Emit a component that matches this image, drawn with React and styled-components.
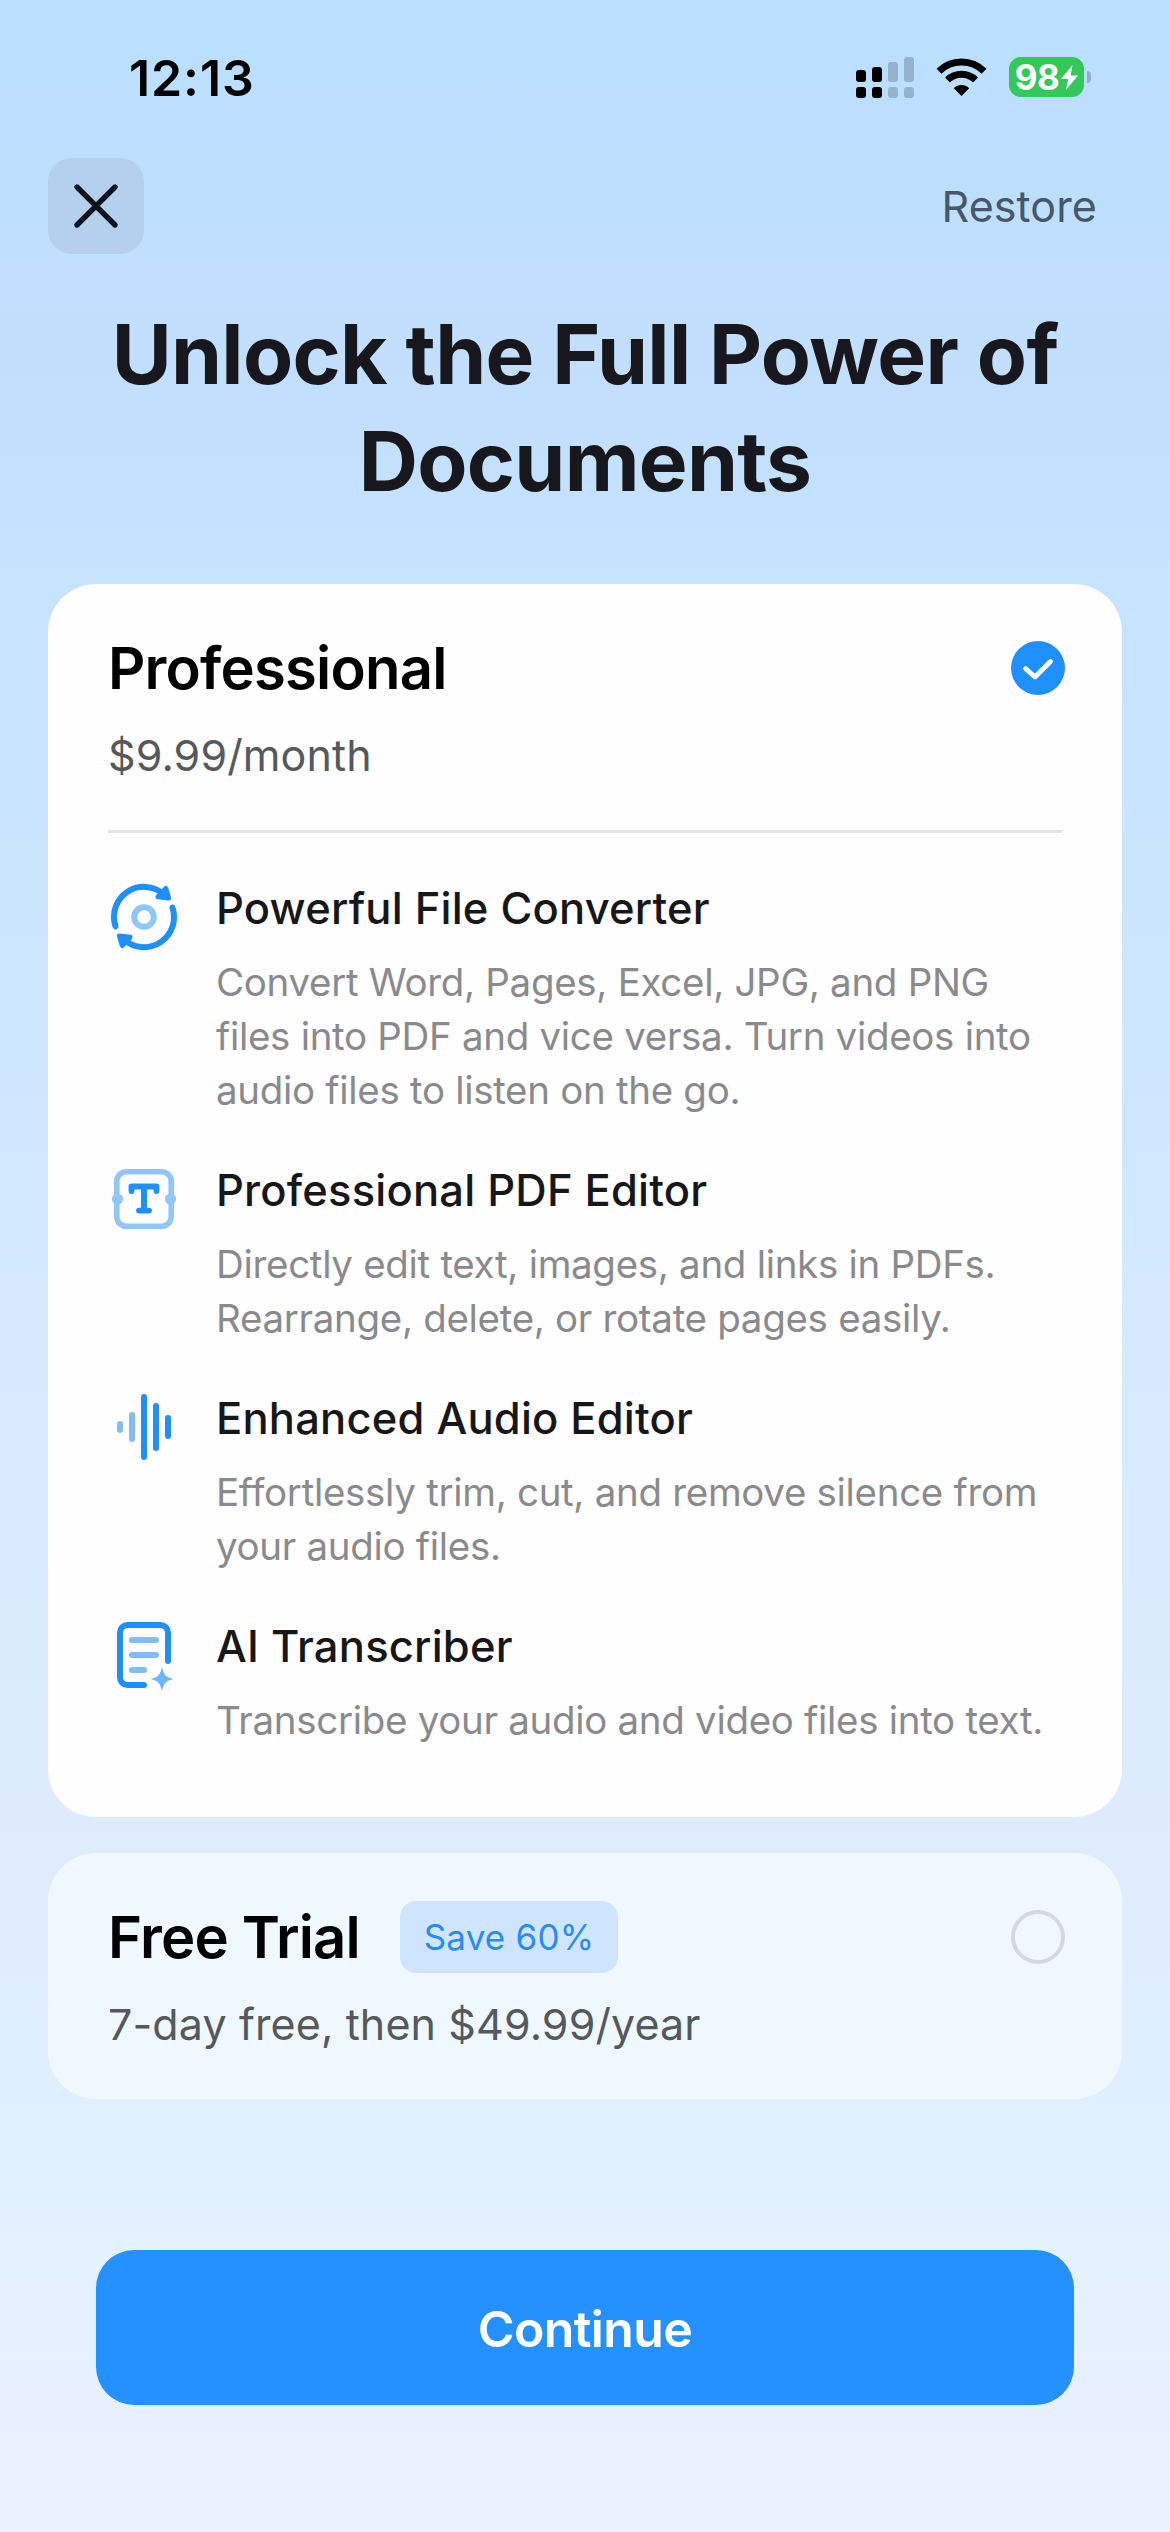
import React, { useState } from 'react'
import styled, { createGlobalStyle } from 'styled-components'

const GlobalStyle = createGlobalStyle`
    * {
        box-sizing: border-box;
    }

    body {
        margin: 0;
        font-family: Inter, "Liberation Sans", sans-serif;
    }

    h1, h2, h3, p {
        margin: 0;
    }

    button {
        font-family: inherit;
        border: none;
        padding: 0;
        cursor: pointer;
    }
`

const Screen = styled.main`
    width: 1170px;
    height: 2532px;
    display: flex;
    flex-direction: column;
    overflow: hidden;
    background: linear-gradient(
        180deg,
        #bbdfff 0,
        #bcdffe 180px,
        #c1dffe 260px,
        #c2e0fd 430px,
        #c6e4ff 600px,
        #cee5ff 1000px,
        #d6ebff 1400px,
        #deebfe 1800px,
        #e0effe 2100px,
        #e4f2fe 2250px,
        #e8f0ff 2410px,
        #ebf2ff 2532px
    );
`

const StatusBar = styled.div`
    height: 158px;
    padding: 57px 79px 0 129px;
    display: flex;
    justify-content: space-between;
    align-items: flex-start;
`

const Time = styled.span`
    font-size: 50px;
    font-weight: 600;
    line-height: 42px;
    letter-spacing: 0.9px;
    color: #000;
`

const StatusIcons = styled.div`
    display: flex;
    align-items: center;
    height: 40px;
`

const Wifi = styled.svg`
    margin: 0 22px 0 22px;
`

const Battery = styled.div`
    width: 75px;
    height: 40px;
    border-radius: 12px;
    background: #34c759;
    color: #fff;
    display: flex;
    align-items: center;
    justify-content: center;
    gap: 2px;
    font-size: 35px;
    font-weight: 700;
    letter-spacing: -0.6px;
`

const BatteryTip = styled.div`
    width: 4px;
    height: 12px;
    margin-left: 3px;
    border-radius: 0 5px 5px 0;
    background: #8fb0d4;
`

const TopBar = styled.header`
    display: flex;
    align-items: center;
    justify-content: space-between;
    padding: 0 73px 0 48px;
`

const CloseButton = styled.button`
    width: 96px;
    height: 96px;
    border-radius: 24px;
    background: #b4d0ec;
    display: flex;
    align-items: center;
    justify-content: center;
`

const RestoreButton = styled.button`
    background: none;
    color: #47566b;
    font-size: 43px;
    line-height: 54px;
    letter-spacing: 0.1px;
`

const Title = styled.h1`
    margin-top: 47px;
    text-align: center;
    white-space: pre-line;
    color: #17171d;
    font-size: 82px;
    font-weight: 700;
    line-height: 107px;
    letter-spacing: -0.7px;
`

const Plans = styled.div`
    display: flex;
    flex-direction: column;
    gap: 36px;
    margin-top: 69px;
    padding: 0 48px;
`

const PlanCard = styled.section`
    padding: 48px 57px 48px 60px;
    border-radius: 48px;
    background: ${({ $selected }) => ($selected ? '#fefefe' : '#f0f8ff')};
`

const PlanHead = styled.div`
    display: flex;
    align-items: center;
    height: 72px;
`

const PlanName = styled.h2`
    color: #000;
    font-size: 58px;
    font-weight: 600;
    line-height: 72px;
    letter-spacing: -0.8px;
    white-space: nowrap;
`

const Badge = styled.span`
    width: 218px;
    height: 72px;
    margin-left: 40px;
    border-radius: 16px;
    background: #cfe5ff;
    color: #2b8cf0;
    font-size: 35px;
    line-height: 72px;
    letter-spacing: 0.2px;
    text-align: center;
`

const Radio = styled.span`
    width: 54px;
    height: 54px;
    margin-left: auto;
    border-radius: 50%;
    display: flex;
    align-items: center;
    justify-content: center;
    background: ${({ $checked }) => ($checked ? '#2190ff' : 'transparent')};
    border: ${({ $checked }) => ($checked ? 'none' : '4.5px solid #d2d9e1')};
`

const Price = styled.p`
    margin-top: 24px;
    color: #55585c;
    font-size: 43px;
    line-height: 54px;
    letter-spacing: 0.12px;
    white-space: nowrap;
`

const Divider = styled.hr`
    height: 3px;
    margin: 48px 3px 48px 0;
    border: none;
    background: #e4e4e6;
`

const Features = styled.ul`
    list-style: none;
    margin: 0 0 22px;
    padding: 0;
    display: flex;
    flex-direction: column;
    gap: 46px;
`

const Feature = styled.li`
    display: flex;
    gap: 36px;
`

const FeatureText = styled.div`
    display: flex;
    flex-direction: column;
    gap: 20px;
`

const FeatureTitle = styled.h3`
    color: #17171a;
    font-size: 43.5px;
    font-weight: 500;
    line-height: 54px;
    letter-spacing: 0.2px;
    white-space: nowrap;
`

const FeatureBody = styled.p`
    color: #8a8a8d;
    font-size: 38.5px;
    line-height: 54px;
    letter-spacing: -0.31px;
    white-space: pre;
`

const ContinueButton = styled.button`
    height: 155px;
    margin: 151px 96px 0;
    padding-top: 2px;
    border-radius: 38px;
    background: #2491ff;
    color: #fff;
    font-size: 50px;
    font-weight: 600;
    letter-spacing: -0.6px;
`

function ConvertIcon() {
    return (
        <svg width="72" height="72" viewBox="0 0 72 72" fill="none" stroke="#1f90fb" strokeWidth="6" strokeLinecap="round" strokeLinejoin="round">
            <path d="M7.5 45.3A30 30 0 0 1 56 13.5" />
            <path d="M64.5 26.7A30 30 0 0 1 16 58.5" />
            <path d="M57.8 7.5L60.6 17L50 15.8Z" fill="#1f90fb" strokeWidth="5" />
            <path d="M14.2 64.5L11.4 55L22 56.2Z" fill="#1f90fb" strokeWidth="5" />
            <circle cx="36" cy="36" r="9.8" stroke="#90c6fb" />
        </svg>
    )
}

function PdfIcon() {
    return (
        <svg width="72" height="72" viewBox="0 0 72 72" fill="none" strokeLinecap="round" strokeLinejoin="round">
            <rect x="8.8" y="8.8" width="54.4" height="54.4" rx="9.5" stroke="#90c6fb" strokeWidth="5.6" />
            <circle cx="9.5" cy="36" r="5.6" fill="#90c6fb" />
            <circle cx="62.5" cy="36" r="5.6" fill="#90c6fb" />
            <path d="M23.5 28V23.5H48.5V28" stroke="#1f90fb" strokeWidth="5.8" />
            <path d="M36 24V47" stroke="#1f90fb" strokeWidth="6" />
            <path d="M31 47.6H41" stroke="#1f90fb" strokeWidth="5.8" />
        </svg>
    )
}

function AudioIcon() {
    return (
        <svg width="72" height="72" viewBox="0 0 72 72" fill="none" strokeWidth="6" strokeLinecap="round">
            <path d="M12 33V39M24 24V48" stroke="#80bcf8" />
            <path d="M36 6V66M48 15V57M60 27V45" stroke="#1f8ffb" />
        </svg>
    )
}

function TranscribeIcon() {
    return (
        <svg width="72" height="74" viewBox="0 0 72 74" fill="none" strokeWidth="6" strokeLinecap="round">
            <path d="M60 42V13.5A7.5 7.5 0 0 0 52.5 6H19.5A7.5 7.5 0 0 0 12 13.5V58.5A7.5 7.5 0 0 0 19.5 66H36" stroke="#1f90fb" />
            <path d="M24 21H48M24 36H48M24 51H36" stroke="#80bcf8" />
            <path d="M54 47.5C55.5 55.5 58 58.5 65.5 60C58 61.5 55.5 64.5 54 72.5C52.5 64.5 50 61.5 42.5 60C50 58.5 52.5 55.5 54 47.5Z" fill="#6cb6fb" />
        </svg>
    )
}

const features = [
    {
        icon: <ConvertIcon />,
        title: 'Powerful File Converter',
        body: 'Convert Word, Pages, Excel, JPG, and PNG\nfiles into PDF and vice versa. Turn videos into\naudio files to listen on the go.',
    },
    {
        icon: <PdfIcon />,
        title: 'Professional PDF Editor',
        body: 'Directly edit text, images, and links in PDFs.\nRearrange, delete, or rotate pages easily.',
    },
    {
        icon: <AudioIcon />,
        title: 'Enhanced Audio Editor',
        body: 'Effortlessly trim, cut, and remove silence from\nyour audio files.',
    },
    {
        icon: <TranscribeIcon />,
        title: 'AI Transcriber',
        body: 'Transcribe your audio and video files into text.',
    },
]

function Status() {
    return (
        <StatusBar>
            <Time>12:13</Time>
            <StatusIcons>
                <svg width="58" height="41" viewBox="0 0 58 41">
                    <g fill="#000">
                        <rect x="0" y="13" width="10" height="12" rx="3" />
                        <rect x="0" y="30" width="10" height="11" rx="3" />
                        <rect x="16" y="10" width="10" height="15" rx="3" />
                        <rect x="16" y="30" width="10" height="11" rx="3" />
                    </g>
                    <g fill="#96b3cd">
                        <rect x="32" y="5" width="10" height="20" rx="3" />
                        <rect x="32" y="30" width="10" height="11" rx="3" />
                        <rect x="48" y="0" width="10" height="25" rx="3" />
                        <rect x="48" y="30" width="10" height="11" rx="3" />
                    </g>
                </svg>
                <Wifi width="51" height="38" viewBox="0 0 51 38" fill="none" stroke="#000" strokeWidth="7">
                    <path d="M3 13.2A32 32 0 0 1 48 13.2" />
                    <path d="M11.5 22A20 20 0 0 1 39.5 22" />
                    <path d="M25.5 38L17.8 30.2A11 11 0 0 1 33.2 30.2Z" fill="#000" stroke="none" />
                </Wifi>
                <Battery>
                    98
                    <svg width="17" height="25" viewBox="0 0 17 25">
                        <path d="M11.5 0L0 14H7.2L5 25L17 10.5H9.6Z" fill="#fff" />
                    </svg>
                </Battery>
                <BatteryTip />
            </StatusIcons>
        </StatusBar>
    )
}

function PlanRadio({ checked }) {
    return (
        <Radio $checked={checked}>
            {checked && (
                <svg width="54" height="54" viewBox="0 0 54 54" fill="none" stroke="#fff" strokeWidth="4.8" strokeLinecap="round" strokeLinejoin="round">
                    <path d="M14.5 27.5L24 36L39.5 20.5" />
                </svg>
            )}
        </Radio>
    )
}

function App() {

    const [plan, setPlan] = useState('pro')

    return (
        <>
            <GlobalStyle />
            <Screen>
                <Status />
                <TopBar>
                    <CloseButton aria-label="Close">
                        <svg width="48" height="48" viewBox="0 0 48 48" stroke="#0d1420" strokeWidth="5.4" strokeLinecap="round">
                            <path d="M5 5L43 43M43 5L5 43" />
                        </svg>
                    </CloseButton>
                    <RestoreButton>Restore</RestoreButton>
                </TopBar>
                <Title>{'Unlock the Full Power of\nDocuments'}</Title>
                <Plans>
                    <PlanCard $selected={plan === 'pro'} onClick={() => setPlan('pro')}>
                        <PlanHead>
                            <PlanName>Professional</PlanName>
                            <PlanRadio checked={plan === 'pro'} />
                        </PlanHead>
                        <Price>$9.99/month</Price>
                        <Divider />
                        <Features>
                            {features.map((item) => (
                                <Feature key={item.title}>
                                    {item.icon}
                                    <FeatureText>
                                        <FeatureTitle>{item.title}</FeatureTitle>
                                        <FeatureBody>{item.body}</FeatureBody>
                                    </FeatureText>
                                </Feature>
                            ))}
                        </Features>
                    </PlanCard>
                    <PlanCard $selected={plan === 'trial'} onClick={() => setPlan('trial')}>
                        <PlanHead>
                            <PlanName>Free Trial</PlanName>
                            <Badge>Save 60%</Badge>
                            <PlanRadio checked={plan === 'trial'} />
                        </PlanHead>
                        <Price>7-day free, then $49.99/year</Price>
                    </PlanCard>
                </Plans>
                <ContinueButton>Continue</ContinueButton>
            </Screen>
        </>
    )
}

export default App
